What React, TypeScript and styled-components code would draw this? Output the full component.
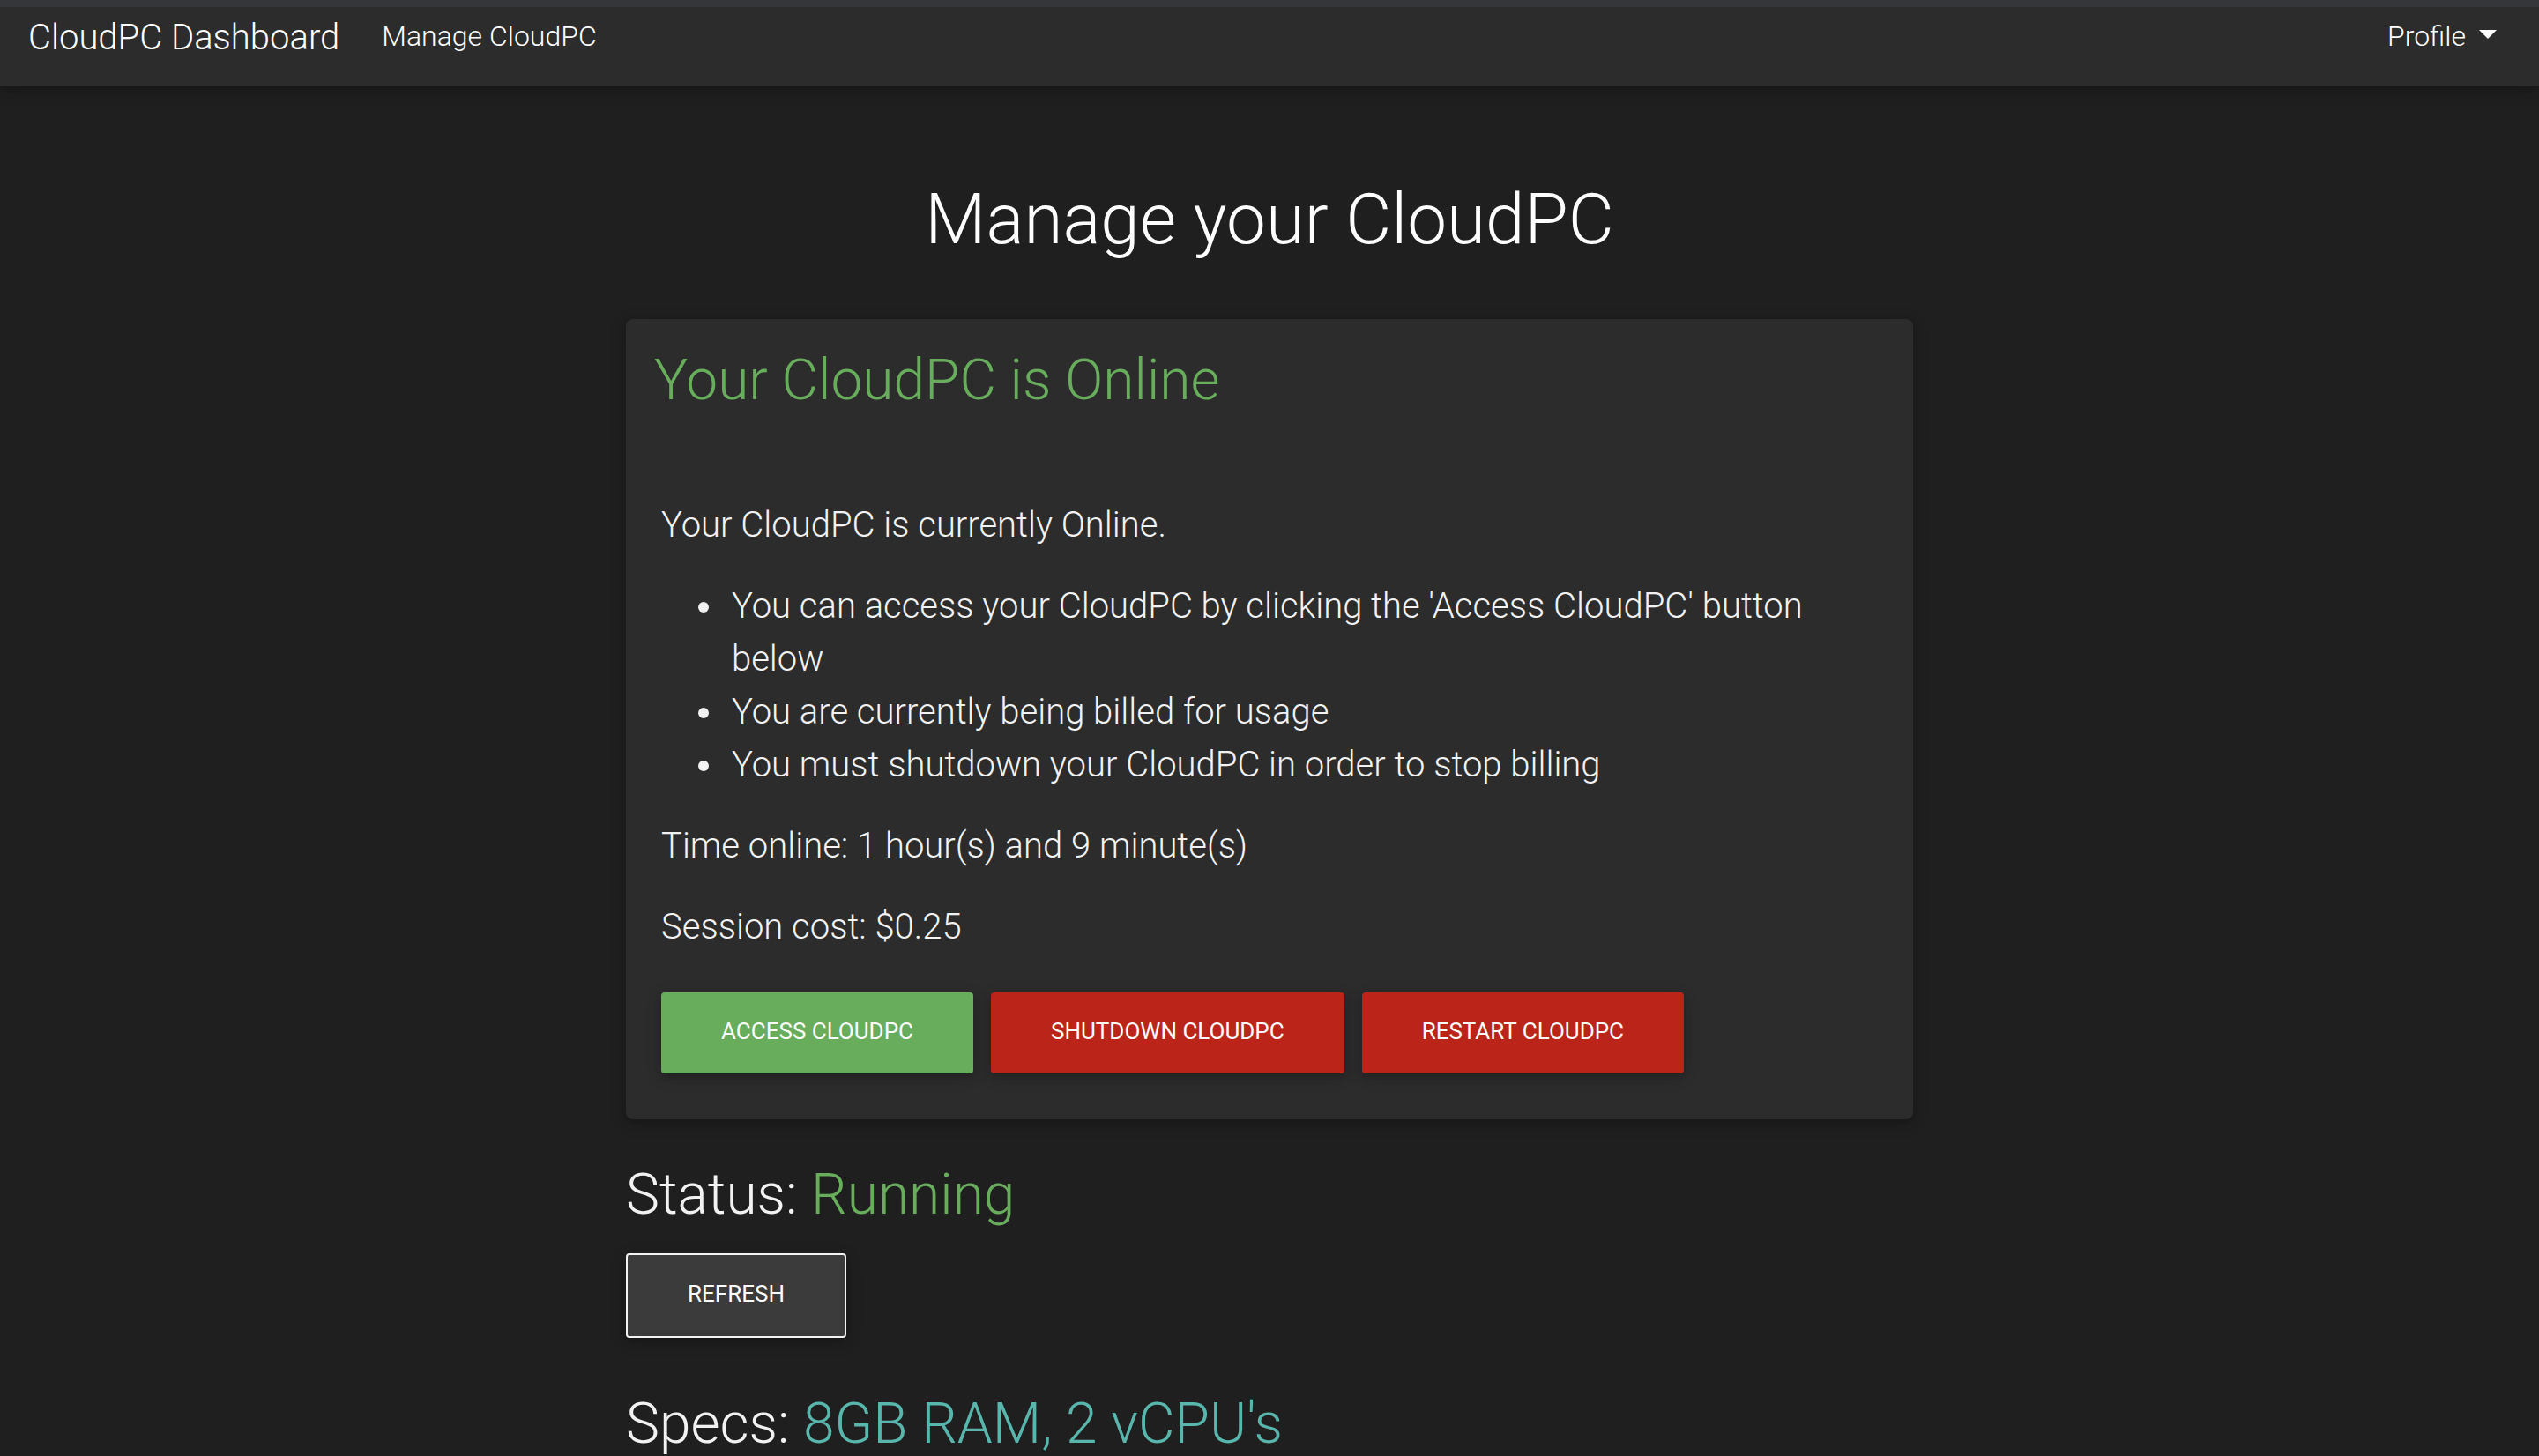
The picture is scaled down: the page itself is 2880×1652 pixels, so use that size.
import React from "react";
import styled, { createGlobalStyle } from "styled-components";

const colors = {
  page: "#1f1f1f",
  surface: "#2c2c2c",
  raised: "#3b3b3b",
  text: "#f2f2f2",
  white: "#ffffff",
  green: "#67ad5b",
  red: "#bb2519",
  teal: "#58b6ac",
};

const shadow =
  "0 4px 10px rgba(0, 0, 0, 0.16), 0 4px 20px rgba(0, 0, 0, 0.12)";

const GlobalStyle = createGlobalStyle`
  *, *::before, *::after { box-sizing: border-box; }
  html { scrollbar-width: none; background: ${colors.page}; }
  body {
    margin: 0;
    background: ${colors.page};
    color: ${colors.text};
    font-family: Roboto, "Liberation Sans", sans-serif;
    font-size: 40px;
    font-weight: 300;
    line-height: 60px;
    -webkit-font-smoothing: antialiased;
  }
  h1, h2, p, ul { margin: 0; font-weight: 300; }
  button { font-family: inherit; cursor: pointer; }
`;

const Navbar = styled.header`
  display: flex;
  align-items: center;
  padding: 5px 32px 25px;
  border-top: 8px solid #35363a;
  background: ${colors.surface};
  box-shadow: ${shadow};
`;

const Brand = styled.a`
  margin-right: 32px;
  color: ${colors.white};
  text-decoration: none;
`;

const NavLinks = styled.nav`
  display: flex;
  flex: 1;
`;

const NavLink = styled.a`
  padding: 0 16px 4px;
  color: ${colors.white};
  font-size: 32px;
  line-height: 48px;
  text-decoration: none;
`;

const ProfileToggle = styled.button`
  display: flex;
  align-items: center;
  gap: 15px;
  padding: 0 16px 4px;
  border: 0;
  background: none;
  color: ${colors.white};
  font-size: 32px;
  font-weight: 300;
  line-height: 48px;
`;

const Caret = styled.span`
  margin-bottom: 4px;
  border-top: 10px solid currentColor;
  border-right: 10px solid transparent;
  border-left: 10px solid transparent;
`;

const Container = styled.main`
  width: 100%;
  max-width: 1460px;
  margin: 0 auto;
  padding-top: 103px;
`;

const PageTitle = styled.h1`
  margin-bottom: 65px;
  color: ${colors.white};
  font-size: 80px;
  line-height: 96px;
  text-align: center;
`;

const Card = styled.section`
  padding: 32px 32px 52px;
  border-radius: 8px;
  background: ${colors.surface};
  box-shadow: ${shadow};
`;

const Heading = styled.h2<{ $color?: string }>`
  color: ${({ $color }) => $color ?? colors.text};
  font-size: 64px;
  line-height: 76px;
`;

const HeadingValue = styled.span<{ $color: string }>`
  color: ${({ $color }) => $color};
`;

const CardBody = styled.div`
  display: flex;
  flex-direction: column;
  gap: 32px;
  padding: 96px 8px 0;
`;

const NoteList = styled.ul`
  padding-left: 80px;
  list-style: none;
`;

const Note = styled.li`
  &::before {
    content: "";
    display: inline-block;
    width: 12px;
    height: 12px;
    margin: 0 26px 0 -38px;
    border-radius: 50%;
    background: currentColor;
    vertical-align: 6px;
  }
`;

const ButtonRow = styled.div`
  display: flex;
  flex-wrap: wrap;
  gap: 20px;
  padding-top: 12px;
`;

const Button = styled.button<{ $background: string; $outlined?: boolean }>`
  padding: 25px 68px 29px;
  border: ${({ $outlined }) => ($outlined ? `2px solid ${colors.text}` : "0")};
  border-radius: 4px;
  background: ${({ $background }) => $background};
  box-shadow: ${shadow};
  color: ${colors.white};
  font-size: 26px;
  font-weight: 400;
  line-height: 38px;
  text-transform: uppercase;
`;

const StatusBlock = styled.section`
  display: flex;
  flex-direction: column;
  align-items: flex-start;
  gap: 28px;
  padding: 48px 0 60px;
`;

const notes = [
  "You can access your CloudPC by clicking the 'Access CloudPC' button below",
  "You are currently being billed for usage",
  "You must shutdown your CloudPC in order to stop billing",
];

export default function App() {
  return (
    <>
      <GlobalStyle />
      <Navbar>
        <Brand href="#">CloudPC Dashboard</Brand>
        <NavLinks>
          <NavLink href="#manage">Manage CloudPC</NavLink>
        </NavLinks>
        <ProfileToggle type="button" aria-haspopup="menu">
          Profile
          <Caret />
        </ProfileToggle>
      </Navbar>
      <Container id="manage">
        <PageTitle>Manage your CloudPC</PageTitle>
        <Card>
          <Heading $color={colors.green}>Your CloudPC is Online</Heading>
          <CardBody>
            <p>Your CloudPC is currently Online.</p>
            <NoteList>
              {notes.map((note) => (
                <Note key={note}>{note}</Note>
              ))}
            </NoteList>
            <p>Time online: 1 hour(s) and 9 minute(s)</p>
            <p>Session cost: $0.25</p>
            <ButtonRow>
              <Button type="button" $background={colors.green}>Access CloudPC</Button>
              <Button type="button" $background={colors.red}>Shutdown CloudPC</Button>
              <Button type="button" $background={colors.red}>Restart CloudPC</Button>
            </ButtonRow>
          </CardBody>
        </Card>
        <StatusBlock>
          <Heading>
            Status: <HeadingValue $color={colors.green}>Running</HeadingValue>
          </Heading>
          <Button type="button" $background={colors.raised} $outlined>Refresh</Button>
        </StatusBlock>
        <Heading>
          Specs: <HeadingValue $color={colors.teal}>8GB RAM, 2 vCPU's</HeadingValue>
        </Heading>
      </Container>
    </>
  );
}
